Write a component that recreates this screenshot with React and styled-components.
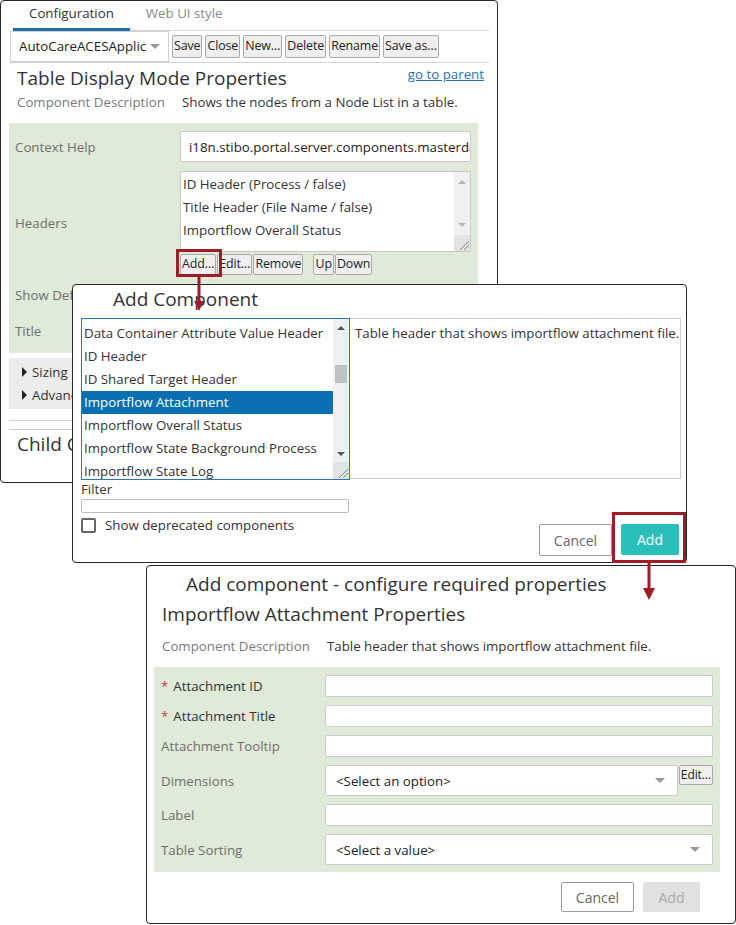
import React from 'react';
import styled, { createGlobalStyle } from 'styled-components';

const FONT = `"Open Sans", "Noto Sans", "Liberation Sans", sans-serif`;
const RED = '#9e1c26';

const GlobalStyle = createGlobalStyle`
  html, body { margin: 0; padding: 0; background: #fff; }
  body { font-family: ${FONT}; font-size: 13.3px; color: #333; }
  * { box-sizing: border-box; }
`;

const Desk = styled.div`
  position: relative;
  width: 736px;
  height: 925px;
  overflow: hidden;
  background: #fff;
`;

const Window = styled.div`
  position: absolute;
  left: ${(p) => p.$x}px;
  top: ${(p) => p.$y}px;
  width: ${(p) => p.$w}px;
  height: ${(p) => p.$h}px;
  background: #fff;
  border: 1px solid #262626;
  border-radius: 4px;
  overflow: hidden;
`;

/* ---------- window 1 ---------- */

const TabBar = styled.div`
  display: flex;
  height: 30px;
  margin: 0 8px 0 12px;
  border-bottom: 1px solid #d4d4d4;
`;

const Tab = styled.div`
  padding: 0 16px;
  line-height: 25px;
  font-size: 13.3px;
  color: ${(p) => (p.$active ? '#333' : '#8a8a8a')};
  border-bottom: 3px solid ${(p) => (p.$active ? '#1f6fa6' : 'transparent')};
  margin-bottom: -1px;
`;

const Toolbar = styled.div`
  display: flex;
  align-items: center;
  gap: 3px;
  height: 32px;
  margin: 0 8px 0 9px;
  border-bottom: 1px solid #d4d4d4;
`;

const Combo = styled.div`
  display: flex;
  align-items: center;
  width: 159px;
  height: 31px;
  margin-top: -1px;
  padding: 0 8px;
  border: 1px solid #d0d0d0;
  background: #fff;
`;

const ComboText = styled.span`
  flex: 1;
  overflow: hidden;
  white-space: nowrap;
  font-size: 13.3px;
  color: #222;
`;

const Caret = styled.span`
  flex: none;
  width: 0;
  height: 0;
  margin-left: 3px;
  border-left: 5px solid transparent;
  border-right: 5px solid transparent;
  border-top: 5px solid ${(p) => p.$color || '#9a9a9a'};
`;

const SmallButton = styled.button`
  font-family: ${FONT};
  font-size: ${(p) => p.$size || 12.4}px;
  height: ${(p) => p.$h || 23}px;
  padding: 0 1px;
  margin: 0;
  margin-left: ${(p) => p.$gapLeft || 0}px;
  background: #efefef;
  color: #222;
  border: 1px solid #a9a9a9;
  border-radius: 2px;
  line-height: 1;
  letter-spacing: -0.1px;
`;

const HeadRow = styled.div`
  display: flex;
  justify-content: space-between;
  padding: 0 13px 0 16px;
  margin-top: 2px;
`;

const Title = styled.div`
  font-size: 19px;
  line-height: 26px;
  color: #333;
  padding-left: ${(p) => p.$indent || 0}px;
  margin-top: ${(p) => p.$top || 0}px;
`;

const ParentLink = styled.a`
  font-size: 13.3px;
  line-height: 18px;
  color: #2a72b8;
  text-decoration: underline;
`;

const DescRow = styled.div`
  display: flex;
  line-height: 20px;
  padding-left: ${(p) => p.$indent}px;
  margin-top: ${(p) => p.$top}px;
  white-space: nowrap;
`;

const DescLabel = styled.span`
  width: 165px;
  flex: none;
  color: #7a7a7a;
`;

const GreenPanel = styled.div`
  display: grid;
  grid-template-columns: ${(p) => p.$label}px 1fr;
  row-gap: ${(p) => p.$gap}px;
  align-items: center;
  margin: ${(p) => p.$margin};
  padding: 8px 7px 7px ${(p) => p.$padLeft}px;
  background: #dfead8;
`;

const FieldLabel = styled.div`
  white-space: nowrap;
  color: ${(p) => (p.$strong ? '#333' : '#6f6f6f')};
`;

const Star = styled.span`
  color: #d0393b;
  margin-right: 5px;
`;

const TextBox = styled.div`
  height: ${(p) => p.$h}px;
  display: flex;
  align-items: center;
  padding: 0 8px;
  background: #fff;
  border: 1px solid #cbcbcb;
  border-radius: 2px;
  overflow: hidden;
  white-space: nowrap;
  color: #222;
`;

const ListBox = styled.div`
  display: flex;
  height: ${(p) => p.$h}px;
  background: #fff;
  border: 1px solid ${(p) => (p.$focus ? '#2e74b8' : '#c8c8c8')};
  border-radius: ${(p) => (p.$focus ? 0 : 2)}px;
  overflow: hidden;
`;

const ListItems = styled.div`
  flex: 1;
  padding-top: ${(p) => p.$top}px;
  overflow: hidden;
`;

const ListItem = styled.div`
  height: 23px;
  line-height: 23px;
  padding-left: 2px;
  white-space: nowrap;
  color: ${(p) => (p.$selected ? '#fff' : '#333')};
  background: ${(p) => (p.$selected ? '#0a6fb1' : 'transparent')};
`;

const ScrollCol = styled.div`
  flex: none;
  width: 16px;
  display: flex;
  flex-direction: column;
  background: #f0f0f0;
`;

const ScrollArrow = styled.div`
  height: ${(p) => p.$h}px;
  display: flex;
  align-items: center;
  justify-content: center;
  &::after {
    content: '';
    border-left: 4px solid transparent;
    border-right: 4px solid transparent;
    ${(p) => (p.$down
    ? `border-top: 4px solid ${p.$color};`
    : `border-bottom: 4px solid ${p.$color};`)}
  }
`;

const ScrollTrack = styled.div`
  flex: 1;
  padding: 0 2px;
`;

const Thumb = styled.div`
  margin-top: ${(p) => p.$top}px;
  height: ${(p) => p.$len}px;
  background: #c1c1c1;
`;

const Grip = styled.div`
  height: ${(p) => p.$h}px;
  background: #e3e3e3;
  display: flex;
  align-items: flex-end;
  justify-content: flex-end;
`;

const ButtonRow = styled.div`
  display: flex;
  gap: 1px;
  margin-top: 2px;
`;

const CheckRow = styled.div`
  display: flex;
  align-items: center;
  gap: 9px;
  height: 22px;
  margin-top: ${(p) => p.$top || 0}px;
`;

const CheckBox = styled.span`
  display: inline-block;
  width: 15px;
  height: 15px;
  border: 2px solid #676767;
  border-radius: 2px;
  background: #fff;
`;

const Collapsibles = styled.div`
  margin: 5px 19px 0 8px;
  padding: 2px 0 3px;
  background: #ececec;
`;

const Collapsible = styled.div`
  display: flex;
  align-items: center;
  height: 23px;
  padding-left: 13px;
  gap: 5px;
  white-space: nowrap;
  &::before {
    content: '';
    border-top: 5px solid transparent;
    border-bottom: 5px solid transparent;
    border-left: 5px solid #222;
  }
`;

const Rule = styled.div`
  margin: ${(p) => p.$top}px 19px 0 8px;
  border-top: 1px solid #cfcfcf;
`;

/* ---------- dialogs ---------- */

const DialogGrid = styled.div`
  display: grid;
  grid-template-columns: 269px 331px;
  margin: 6px 5px 0 8px;
`;

const DescBox = styled.div`
  height: 161px;
  padding: 4px 5px;
  line-height: 20px;
  border: 1px solid #cfcfcf;
  border-left: none;
  white-space: nowrap;
`;

const FilterLabel = styled.div`
  line-height: 18px;
  color: #333;
`;

const FilterInput = styled.div`
  height: 14px;
  width: 268px;
  margin-top: 1px;
  border: 1px solid #bdbdbd;
  border-radius: 2px;
`;

const Footer = styled.div`
  display: flex;
  justify-content: flex-end;
  gap: ${(p) => p.$gap}px;
  padding: ${(p) => p.$pad};
`;

const DialogButton = styled.button`
  font-family: ${FONT};
  font-size: 14px;
  width: ${(p) => p.$w}px;
  height: ${(p) => p.$h}px;
  margin: 0;
  padding: 0;
  border-radius: 2px;
  border: 1px solid ${(p) => (p.$kind === 'plain' ? '#9a9a9a' : 'transparent')};
  background: ${(p) => ({ plain: '#fff', primary: '#2bbfbc', disabled: '#e1e1e1' })[p.$kind]};
  color: ${(p) => ({ plain: '#666', primary: '#fff', disabled: '#aaa' })[p.$kind]};
`;

const SelectBox = styled.div`
  flex: 1;
  height: 31px;
  display: flex;
  align-items: center;
  justify-content: space-between;
  padding: 0 12px 0 10px;
  background: #fff;
  border: 1px solid #cbcbcb;
  border-radius: 2px;
  color: #222;
`;

const SelectCell = styled.div`
  display: flex;
  align-items: flex-start;
  gap: 1px;
`;

/* ---------- overlays ---------- */

const Highlight = styled.div`
  position: absolute;
  left: ${(p) => p.$x}px;
  top: ${(p) => p.$y}px;
  width: ${(p) => p.$w}px;
  height: ${(p) => p.$h}px;
  border: 3px solid ${RED};
`;

const ArrowSvg = styled.svg`
  position: absolute;
  left: ${(p) => p.$x}px;
  top: ${(p) => p.$y}px;
`;

function Arrow({ x, y, length, head }) {
  const w = head;
  return (
    <ArrowSvg $x={x - w / 2} $y={y} width={w} height={length}>
      <rect x={w / 2 - 1.5} y={0} width={3} height={length - head + 1} fill={RED} />
      <polygon points={`0,${length - head} ${w},${length - head} ${w / 2},${length}`} fill={RED} />
    </ArrowSvg>
  );
}

function Scrollbar({ arrowColor, arrowH, thumb, gripH }) {
  return (
    <ScrollCol>
      <ScrollArrow $h={arrowH} $color={arrowColor} />
      <ScrollTrack>{thumb && <Thumb $top={thumb.top} $len={thumb.len} />}</ScrollTrack>
      <ScrollArrow $h={arrowH} $color={arrowColor} $down />
      <Grip $h={gripH}>
        <svg width="14" height="14">
          <path d="M13 4 L4 13 M13 8 L8 13" stroke="#8a8a8a" strokeWidth="1" />
        </svg>
      </Grip>
    </ScrollCol>
  );
}

const headers = [
  'ID Header (Process / false)',
  'Title Header (File Name / false)',
  'Importflow Overall Status',
];

const components = [
  'Data Container Attribute Value Header',
  'ID Header',
  'ID Shared Target Header',
  'Importflow Attachment',
  'Importflow Overall Status',
  'Importflow State Background Process',
  'Importflow State Log',
];

const requiredFields = [
  { label: 'Attachment ID', required: true },
  { label: 'Attachment Title', required: true },
  { label: 'Attachment Tooltip' },
];

export default function App() {
  return (
    <>
      <GlobalStyle />
      <Desk>
        <Window $x={0} $y={0} $w={498} $h={483}>
          <TabBar>
            <Tab $active>Configuration</Tab>
            <Tab>Web UI style</Tab>
          </TabBar>
          <Toolbar>
            <Combo>
              <ComboText>AutoCareACESApplication</ComboText>
              <Caret />
            </Combo>
            {['Save', 'Close', 'New…', 'Delete', 'Rename', 'Save as…'].map((l) => (
              <SmallButton key={l}>{l}</SmallButton>
            ))}
          </Toolbar>
          <HeadRow>
            <Title>Table Display Mode Properties</Title>
            <ParentLink>go to parent</ParentLink>
          </HeadRow>
          <DescRow $indent={16} $top={1}>
            <DescLabel>Component Description</DescLabel>
            <span>Shows the nodes from a Node List in a table.</span>
          </DescRow>
          <GreenPanel $label={165} $gap={9} $padLeft={6} $margin="11px 19px 0 8px">
            <FieldLabel>Context Help</FieldLabel>
            <TextBox $h={31}>i18n.stibo.portal.server.components.masterdata</TextBox>

            <FieldLabel>Headers</FieldLabel>
            <div>
              <ListBox $h={81}>
                <ListItems $top={1}>
                  {headers.map((h) => <ListItem key={h}>{h}</ListItem>)}
                </ListItems>
                <Scrollbar arrowColor="#b5b5b5" arrowH={20} gripH={16} />
              </ListBox>
              <ButtonRow>
                <SmallButton $h={21}>Add…</SmallButton>
                <SmallButton $h={21}>Edit…</SmallButton>
                <SmallButton $h={21}>Remove</SmallButton>
                <SmallButton $h={21} $gapLeft={9}>Up</SmallButton>
                <SmallButton $h={21}>Down</SmallButton>
              </ButtonRow>
            </div>

            <FieldLabel>Show Default Header</FieldLabel>
            <CheckRow><CheckBox /></CheckRow>

            <FieldLabel>Title</FieldLabel>
            <TextBox $h={31} />
          </GreenPanel>
          <Collapsibles>
            <Collapsible>Sizing</Collapsible>
            <Collapsible>Advanced</Collapsible>
          </Collapsibles>
          <Rule $top={11} />
          <Rule $top={8} />
          <Title $indent={16} $top={1}>Child Components</Title>
        </Window>

        <Window $x={72} $y={284} $w={615} $h={279}>
          <Title $indent={40} $top={1}>Add Component</Title>
          <DialogGrid>
            <ListBox $h={162} $focus>
              <ListItems $top={3}>
                {components.map((c) => (
                  <ListItem key={c} $selected={c === 'Importflow Attachment'}>{c}</ListItem>
                ))}
              </ListItems>
              <Scrollbar arrowColor="#555" arrowH={17} gripH={17} thumb={{ top: 29, len: 18 }} />
            </ListBox>
            <DescBox>Table header that shows importflow attachment file.</DescBox>
            <div>
              <FilterLabel>Filter</FilterLabel>
              <FilterInput />
              <CheckRow $top={1}>
                <CheckBox />
                <span>Show deprecated components</span>
              </CheckRow>
            </div>
            <Footer $gap={9} $pad="44px 2px 0 0">
              <DialogButton $kind="plain" $w={73} $h={32}>Cancel</DialogButton>
              <DialogButton $kind="primary" $w={58} $h={31}>Add</DialogButton>
            </Footer>
          </DialogGrid>
        </Window>

        <Window $x={146} $y={565} $w={590} $h={359}>
          <Title $indent={39} $top={5}>Add component - configure required properties</Title>
          <Title $indent={15} $top={4}>Importflow Attachment Properties</Title>
          <DescRow $indent={15} $top={9}>
            <DescLabel>Component Description</DescLabel>
            <span>Table header that shows importflow attachment file.</span>
          </DescRow>
          <GreenPanel $label={164} $gap={8} $padLeft={7} $margin="11px 15px 0 7px">
            {requiredFields.map((f) => (
              <React.Fragment key={f.label}>
                <FieldLabel $strong={f.required}>
                  {f.required && <Star>*</Star>}
                  {f.label}
                </FieldLabel>
                <TextBox $h={22} />
              </React.Fragment>
            ))}
            <FieldLabel>Dimensions</FieldLabel>
            <SelectCell>
              <SelectBox>
                <span>&lt;Select an option&gt;</span>
                <Caret $color="#999" />
              </SelectBox>
              <SmallButton $h={20} $size={12}>Edit…</SmallButton>
            </SelectCell>
            <FieldLabel>Label</FieldLabel>
            <TextBox $h={22} />
            <FieldLabel>Table Sorting</FieldLabel>
            <SelectCell>
              <SelectBox>
                <span>&lt;Select a value&gt;</span>
                <Caret $color="#999" />
              </SelectBox>
            </SelectCell>
          </GreenPanel>
          <Footer $gap={9} $pad="10px 35px 0 0">
            <DialogButton $kind="plain" $w={73} $h={30}>Cancel</DialogButton>
            <DialogButton $kind="disabled" $w={57} $h={30}>Add</DialogButton>
          </Footer>
        </Window>

        <Highlight $x={176} $y={249} $w={46} $h={28} />
        <Arrow x={199} y={276} length={35} head={10} />
        <Highlight $x={612} $y={512} $w={74} $h={51} />
        <Arrow x={649} y={562} length={38} head={12} />
      </Desk>
    </>
  );
}
